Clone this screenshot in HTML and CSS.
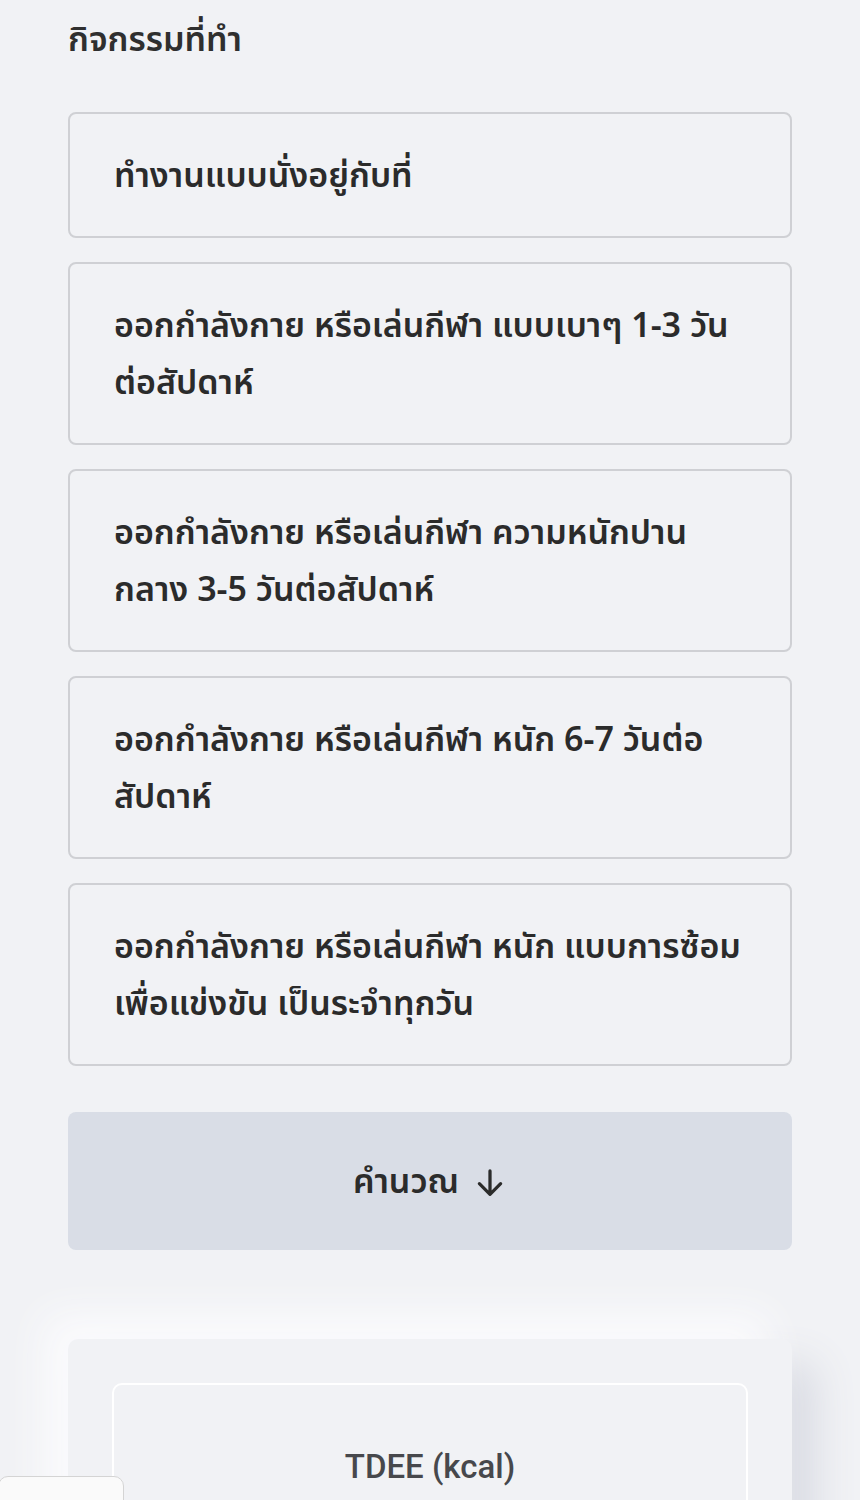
FILE: index.html
```html
<!DOCTYPE html>
<html lang="th">
<head>
  <meta charset="UTF-8">
  <meta name="viewport" content="width=device-width, initial-scale=1.0">
  <title>คำนวณ TDEE</title>
  <link rel="stylesheet" href="styles.css">
</head>
<body>
  <div class="container">
    <h3 class="section-title">กิจกรรมที่ทำ</h3>
    <div class="options">
      <div class="option">ทำงานแบบนั่งอยู่กับที่</div>
      <div class="option">ออกกำลังกาย หรือเล่นกีฬา แบบเบาๆ 1-3 วันต่อสัปดาห์</div>
      <div class="option">ออกกำลังกาย หรือเล่นกีฬา ความหนักปานกลาง 3-5 วันต่อสัปดาห์</div>
      <div class="option">ออกกำลังกาย หรือเล่นกีฬา หนัก 6-7 วันต่อสัปดาห์</div>
      <div class="option">ออกกำลังกาย หรือเล่นกีฬา หนัก แบบการซ้อมเพื่อแข่งขัน เป็นระจำทุกวัน</div>
    </div>
    <button class="calc-btn">คำนวณ <span class="arrow">
      <svg width="34" height="34" viewBox="0 0 24 24" fill="none" stroke="#2b2b2b" stroke-width="2.3" stroke-linecap="round" stroke-linejoin="round"><path d="M12 3.5v16.5M4.5 12.5 12 20l7.5-7.5"/></svg>
    </span></button>

    <div class="result-card">
      <div class="result-box">
        <div class="result-label">TDEE (kcal)</div>
      </div>
    </div>
  </div>
  <div class="float-tab"></div>
</body>
</html>
```

FILE: styles.css
```css
body {
  font-family: "Noto Sans Thai", "Noto Sans", "Liberation Sans", sans-serif;
  margin: 0;
  background-color: #f1f2f5;
  color: #2b2b2b;
}
.container {
  padding: 0 68px;
}
.section-title {
  margin: 0;
  padding-top: 20px;
  font-size: 34px;
  font-weight: 600;
  line-height: 42px;
  color: #2f2f2f;
}
.options {
  margin-top: 50px;
  display: flex;
  flex-direction: column;
  gap: 24px;
}
.option {
  border: 2px solid #cfd0d4;
  border-radius: 8px;
  padding: 34px 44px 31px;
  font-size: 34px;
  line-height: 57px;
  font-weight: 600;
  color: #2b2b2b;
}
.calc-btn {
  display: flex;
  align-items: center;
  justify-content: center;
  gap: 14px;
  width: 100%;
  height: 138px;
  margin-top: 46px;
  padding-top: 4px;
  border: none;
  border-radius: 8px;
  background-color: #d9dde6;
  font-family: inherit;
  font-size: 34px;
  font-weight: 600;
  color: #2b2b2b;
}
.arrow {
  display: flex;
}
.result-card {
  margin-top: 89px;
  background: #f1f2f5;
  border-radius: 10px;
  padding: 44px 44px 40px;
  box-shadow: -24px -24px 40px #fbfbfd, 24px 24px 40px #d9dbe3;
}
.result-box {
  border: 2px solid #fff;
  border-radius: 10px;
  padding: 62px 20px 80px;
  text-align: center;
}
.result-label {
  font-family: Roboto, "Liberation Sans", sans-serif;
  font-size: 33px;
  font-weight: 500;
  color: #47484c;
}
.float-tab {
  position: fixed;
  left: -2px;
  bottom: -20px;
  width: 124px;
  height: 42px;
  background: #fafafa;
  border: 1px solid #d4d4d4;
  border-radius: 10px;
}
```
